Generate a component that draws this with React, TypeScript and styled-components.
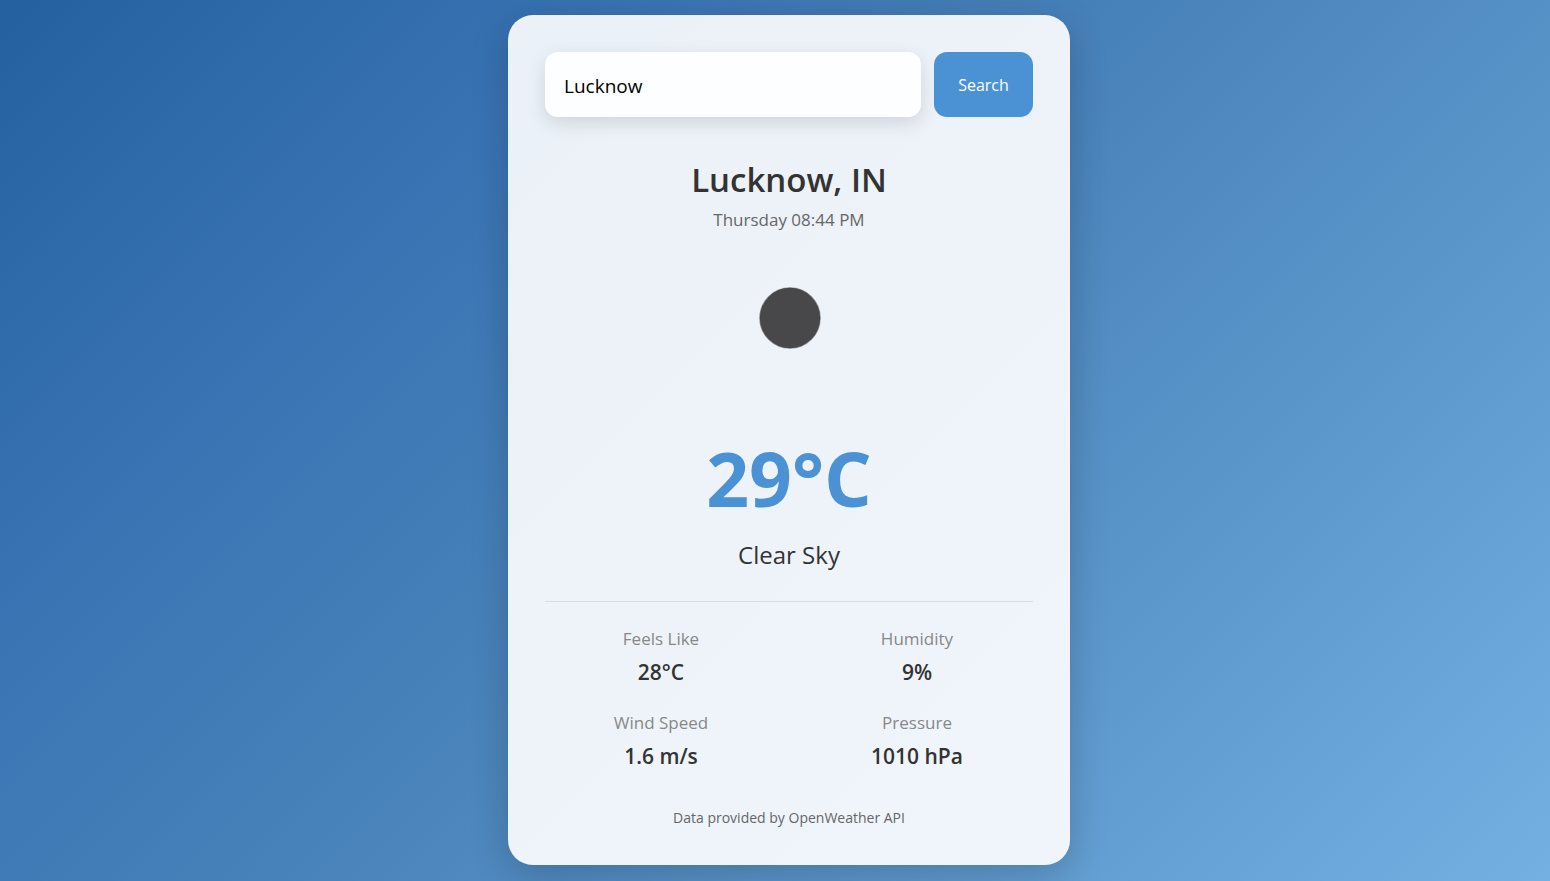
import React, { useState } from "react";
import styled, { createGlobalStyle } from "styled-components";

const GlobalStyle = createGlobalStyle`
  * {
    box-sizing: border-box;
    margin: 0;
    padding: 0;
  }
  body {
    font-family: "Segoe UI", "Open Sans", "Noto Sans", sans-serif;
    color: #333;
  }
`;

const Page = styled.div`
  min-height: 100vh;
  display: flex;
  justify-content: center;
  align-items: center;
  padding: 15px 16px 16px 44px;
  background: linear-gradient(135deg, #2460a0 0%, #3973b3 25%, #4a84bb 50%, #74b0e2 100%);
`;

const Card = styled.main`
  width: 100%;
  max-width: 562px;
  padding: 37px;
  border-radius: 25px;
  background: rgba(255, 255, 255, 0.9);
  box-shadow: 0 10px 38px rgba(0, 0, 0, 0.2);
  text-align: center;
`;

const SearchBar = styled.form`
  display: flex;
  gap: 13px;
  margin-bottom: 38px;
`;

const CityInput = styled.input`
  flex: 1;
  min-width: 0;
  height: 65px;
  padding: 2px 19px 0;
  border: none;
  outline: none;
  border-radius: 13px;
  background: rgba(255, 255, 255, 0.9);
  box-shadow: 0 6px 19px rgba(0, 0, 0, 0.12);
  font-family: inherit;
  font-size: 19px;
  color: #000;
`;

const SearchButton = styled.button`
  width: 99px;
  border: none;
  border-radius: 13px;
  background: #4b92d4;
  color: #fff;
  font-family: inherit;
  font-size: 16px;
  cursor: pointer;
`;

const City = styled.h1`
  font-size: 33px;
  font-weight: 600;
  line-height: 50px;
`;

const DateTime = styled.p`
  font-size: 17px;
  line-height: 30px;
  color: #666;
`;

const WeatherIcon = styled.svg`
  display: block;
  width: 188px;
  height: 188px;
  margin: 0 auto 5px;
`;

const Temperature = styled.p`
  margin-bottom: 10px;
  font-size: 75px;
  font-weight: 700;
  line-height: 100px;
  color: #4b92d4;
`;

const Description = styled.p`
  margin-bottom: 29px;
  font-size: 24px;
  line-height: 34px;
`;

const Details = styled.dl`
  display: grid;
  grid-template-columns: 1fr 1fr;
  gap: 21px 24px;
  padding-top: 22px;
  border-top: 1px solid #d8dde2;
`;

const Detail = styled.div`
  line-height: 30px;
`;

const Label = styled.dt`
  margin-bottom: 3px;
  font-size: 17px;
  color: #888;
`;

const Value = styled.dd`
  font-size: 21px;
  font-weight: 600;
`;

const Credit = styled.footer`
  margin-top: 37px;
  font-size: 14px;
  line-height: 20px;
  color: #666;
`;

const details = [
  { label: "Feels Like", value: "28°C" },
  { label: "Humidity", value: "9%" },
  { label: "Wind Speed", value: "1.6 m/s" },
  { label: "Pressure", value: "1010 hPa" },
];

export default function App() {
  const [city, setCity] = useState("Lucknow");
  return (
    <>
      <GlobalStyle />
      <Page>
        <Card>
          <SearchBar onSubmit={(event) => event.preventDefault()}>
            <CityInput
              aria-label="City"
              value={city}
              onChange={(event) => setCity(event.target.value)}
            />
            <SearchButton type="submit">Search</SearchButton>
          </SearchBar>
          <City>Lucknow, IN</City>
          <DateTime>Thursday 08:44 PM</DateTime>
          <WeatherIcon viewBox="0 0 188 188" role="img" aria-label="Clear night">
            <circle cx="95" cy="83" r="30.2" fill="#48484a" stroke="#48484a" strokeOpacity="0.5" strokeWidth="1.2" />
          </WeatherIcon>
          <Temperature>29°C</Temperature>
          <Description>Clear Sky</Description>
          <Details>
            {details.map((item) => (
              <Detail key={item.label}>
                <Label>{item.label}</Label>
                <Value>{item.value}</Value>
              </Detail>
            ))}
          </Details>
          <Credit>Data provided by OpenWeather API</Credit>
        </Card>
      </Page>
    </>
  );
}
